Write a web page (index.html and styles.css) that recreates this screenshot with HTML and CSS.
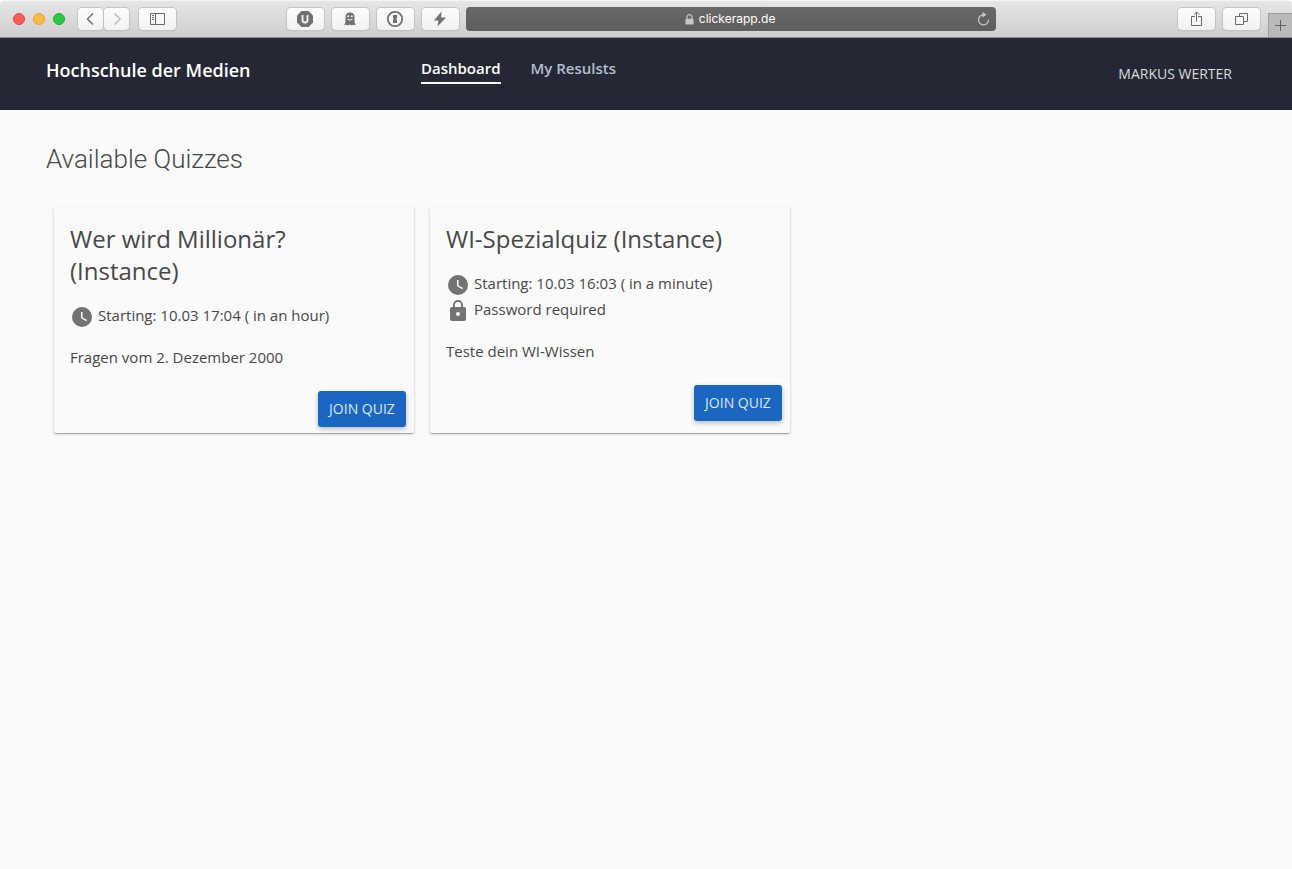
FILE: index.html
```html
<!DOCTYPE html>
<html lang="en">
<head>
<meta charset="utf-8">
<title>Available Quizzes</title>
<link rel="stylesheet" href="styles.css">
</head>
<body>
<div class="window">
  <div class="chrome">
    <div class="lights">
      <span class="light light-close"></span>
      <span class="light light-min"></span>
      <span class="light light-max"></span>
    </div>
    <div class="history">
      <button class="tool tool-small" type="button" aria-label="Back">
        <svg width="26" height="22" viewBox="0 0 26 22"><path d="M15 5.500L9.500 11l5.500 5.500" fill="none" stroke="#707070" stroke-width="1.500"/></svg>
      </button>
      <button class="tool tool-small" type="button" aria-label="Forward">
        <svg width="26" height="22" viewBox="0 0 26 22"><path d="M10.500 5.500L16 11l-5.500 5.500" fill="none" stroke="#bdbdbd" stroke-width="1.500"/></svg>
      </button>
    </div>
    <button class="tool" type="button" aria-label="Sidebar">
      <svg width="15" height="12" viewBox="0 0 15 12"><path d="M.5.5h14v11H.5zM5.500.5v11" fill="none" stroke="#6a6a6a"/><path d="M2 2.500h2M2 4.500h2M2 6.500h2" stroke="#6a6a6a"/></svg>
    </button>
    <span class="space-left"></span>
    <div class="tools">
      <button class="tool" type="button" aria-label="Content blocker">
        <svg width="18" height="18" viewBox="0 0 18 18"><path d="M5.500 1h7L17 5.500v7L12.500 17h-7L1 12.500v-7z" fill="#707070"/><path d="M6.500 5v5q0 2.500 2.500 2.500t2.500-2.500V5" fill="none" stroke="#f6f6f6" stroke-width="1.800"/></svg>
      </button>
      <button class="tool" type="button" aria-label="Tracker blocker">
        <svg width="14" height="16" viewBox="0 0 14 16"><path d="M2.500 6Q2.500 1.500 7 1.500T11.500 6v5l1.200 3.200-2.500-.4-1.200.7-2-1-2 1-1.200-.7-2.500.4L2.500 11z" fill="#707070"/><circle cx="5.200" cy="5.200" r="1" fill="#f6f6f6"/><circle cx="8.800" cy="5.200" r="1" fill="#f6f6f6"/><path d="M4.500 8q2.500 2.500 5 0" fill="none" stroke="#f6f6f6"/></svg>
      </button>
      <button class="tool" type="button" aria-label="Password manager">
        <svg width="18" height="18" viewBox="0 0 18 18"><circle cx="9" cy="9" r="7.200" fill="none" stroke="#707070" stroke-width="1.800"/><path d="M7 5h4v3l-.8 1 .8 1v3H7v-3l.8-1L7 8z" fill="#707070"/></svg>
      </button>
      <button class="tool" type="button" aria-label="Power saver">
        <svg width="14" height="16" viewBox="0 0 14 16"><path d="M8.500.5L1 9.500h4.500L4.500 15.500 13 6.500H8z" fill="#707070"/></svg>
      </button>
    </div>
    <div class="address">
      <span class="site">
        <svg width="9" height="11" viewBox="0 0 9 11"><path d="M2 5V3.200a2.500 2.500 0 0 1 5 0V5" fill="none" stroke="#c6c6c6" stroke-width="1.200"/><rect x="0.500" y="4.800" width="8" height="5.700" rx=".6" fill="#c6c6c6"/></svg>
        <span>clickerapp.de</span>
      </span>
      <button class="reload" type="button" aria-label="Reload">
        <svg width="13" height="14" viewBox="0 0 13 14"><path d="M6.500 2.800A5 5 0 1 0 11.500 7.800" fill="none" stroke="#c9c9c9" stroke-width="1.200"/><path d="M5.500 0l4 2.800-4 2.700z" fill="#c9c9c9"/></svg>
      </button>
    </div>
    <span class="space-right"></span>
    <div class="tools">
      <button class="tool" type="button" aria-label="Share">
        <svg width="11" height="16" viewBox="0 0 11 16"><path d="M4 5.500H.5v9h10v-9H7M5.500 10.500V1M2.800 3.700L5.500 1l2.700 2.700" fill="none" stroke="#6a6a6a"/></svg>
      </button>
      <button class="tool" type="button" aria-label="Show tabs">
        <svg width="13" height="12" viewBox="0 0 13 12"><path d="M.5 3.500h8v8h-8zM4.500 3V.5h8v8H9" fill="none" stroke="#6a6a6a"/></svg>
      </button>
    </div>
    <button class="new-tab" type="button" aria-label="New tab">
      <svg width="11" height="11" viewBox="0 0 11 11"><path d="M5.500 0v11M0 5.500h11" stroke="#606060"/></svg>
    </button>
  </div>

  <header class="header">
    <div class="brand">Hochschule der Medien</div>
    <nav class="nav">
      <a class="nav-link active" href="#dashboard">Dashboard</a>
      <a class="nav-link" href="#results">My Resulsts</a>
    </nav>
    <button class="user" type="button">Markus Werter</button>
  </header>

  <main class="main">
    <h1 class="title">Available Quizzes</h1>
    <div class="cards">
      <article class="card">
        <h2 class="card-title">Wer wird Millionär? (Instance)</h2>
        <ul class="facts">
          <li class="fact">
            <svg class="icon" width="24" height="24" viewBox="0 0 24 24"><path fill-rule="evenodd" d="M12 2a10 10 0 1 0 0 20 10 10 0 0 0 0-20zm4.200 14.200L11 13V7h1.500v5.200l4.500 2.700z" fill="#737373"/></svg>
            <span>Starting: 10.03 17:04 ( in an hour)</span>
          </li>
        </ul>
        <p class="description">Fragen vom 2. Dezember 2000</p>
        <div class="actions"><button class="join" type="button">Join Quiz</button></div>
      </article>
      <article class="card">
        <h2 class="card-title">WI-Spezialquiz (Instance)</h2>
        <ul class="facts">
          <li class="fact">
            <svg class="icon" width="24" height="24" viewBox="0 0 24 24"><path fill-rule="evenodd" d="M12 2a10 10 0 1 0 0 20 10 10 0 0 0 0-20zm4.200 14.200L11 13V7h1.500v5.200l4.500 2.700z" fill="#737373"/></svg>
            <span>Starting: 10.03 16:03 ( in a minute)</span>
          </li>
          <li class="fact">
            <svg class="icon" width="24" height="24" viewBox="0 0 24 24"><path d="M18 8h-1V6A5 5 0 0 0 7 6v2H6a2 2 0 0 0-2 2v10a2 2 0 0 0 2 2h12a2 2 0 0 0 2-2V10a2 2 0 0 0-2-2zm-6 9a2 2 0 1 1 0-4 2 2 0 0 1 0 4zm3.100-9H8.900V6a3.100 3.100 0 0 1 6.200 0z" fill="#737373"/></svg>
            <span>Password required</span>
          </li>
        </ul>
        <p class="description">Teste dein WI-Wissen</p>
        <div class="actions"><button class="join" type="button">Join Quiz</button></div>
      </article>
    </div>
  </main>
</div>
</body>
</html>
```
FILE: styles.css
```css
* {
  box-sizing: border-box;
}

body {
  margin: 0;
  background: #fff;
  color: #484848;
  font: 15px/24px "Open Sans", sans-serif;
}

button {
  margin: 0;
  padding: 0;
  border: 0;
  background: none;
  color: inherit;
  font: inherit;
}

svg {
  display: block;
  flex: none;
}

.window {
  min-height: 100vh;
  border-radius: 5px;
  overflow: hidden;
  background: #fafafa;
}

.chrome {
  display: flex;
  align-items: center;
  height: 38px;
  padding-left: 13px;
  border-top: 1px solid #f4f4f4;
  border-bottom: 1px solid #8f8f8f;
  background: linear-gradient(#e6e6e6, #cecece);
}

.lights {
  display: flex;
  gap: 8px;
  margin-right: 13px;
}

.light {
  width: 12px;
  height: 12px;
  border-radius: 50%;
  border: 1px solid #e0443e;
  background: #fc5b57;
}

.light-min {
  border-color: #dea034;
  background: #fdbc40;
}

.light-max {
  border-color: #20a935;
  background: #2ac940;
}

.history {
  display: flex;
  gap: 1px;
  margin-right: 10px;
}

.tool {
  display: flex;
  align-items: center;
  justify-content: center;
  width: 37px;
  height: 22px;
  border-radius: 4px;
  background: linear-gradient(#fdfdfd, #f2f2f2);
  box-shadow: 0 0 0 1px #c4c4c4, 0 1px 1px #a6a6a6;
}

.tool-small {
  width: 25px;
}

.space-left {
  flex: 111;
}

.space-right {
  flex: 182;
}

.tools {
  display: flex;
  gap: 8px;
}

.address {
  display: flex;
  align-items: center;
  width: 41.5%;
  height: 24px;
  margin-left: 7px;
  padding: 0 6px;
  border-radius: 4px;
  background: linear-gradient(#686868, #5e5e5e);
  color: #fff;
  font: 12px/24px Inter, sans-serif;
}

.site {
  display: flex;
  flex: 1;
  align-items: center;
  justify-content: center;
  gap: 5px;
  padding-left: 11px;
}

.new-tab {
  display: flex;
  align-items: center;
  justify-content: center;
  align-self: flex-end;
  width: 24px;
  height: 24px;
  margin-left: 8px;
  border: 1px solid #9c9c9c;
  border-width: 1px 0 0 1px;
  background: #bababa;
}

.header {
  display: grid;
  grid-template-columns: 375px 1fr auto;
  align-items: start;
  height: 72px;
  padding: 0 60px 0 46px;
  background: #252834;
  color: #fff;
}

.brand {
  padding-top: 20px;
  font-size: 18px;
  font-weight: 600;
}

.nav {
  display: flex;
  gap: 30px;
  padding-top: 20px;
}

.nav-link {
  padding-bottom: 3px;
  border-bottom: 2px solid transparent;
  color: #b3bfcb;
  font-weight: 600;
  line-height: 21px;
  text-decoration: none;
}

.active {
  border-color: #fff;
  color: #fff;
}

.user {
  padding-top: 18px;
  color: #dadbdd;
  font-size: 14px;
  line-height: 36px;
  text-transform: uppercase;
}

.main {
  padding: 33px 46px;
}

.title {
  margin: 0;
  font: 300 26px/32px Roboto, sans-serif;
}

.cards {
  display: grid;
  grid-template-columns: repeat(auto-fill, 360px);
  gap: 16px;
  padding: 32px 8px;
}

.card {
  min-height: 226px;
  padding: 16px 8px 6px 16px;
  border-radius: 2px;
  background: #fafafa;
  box-shadow: 0 1px 3px rgba(0, 0, 0, .2), 0 1px 1px rgba(0, 0, 0, .14), 0 2px 1px -1px rgba(0, 0, 0, .12);
}

.card-title {
  margin: 0 8px 16px 0;
  font-size: 24px;
  font-weight: 400;
  line-height: 32px;
}

.facts {
  margin: 0 0 16px;
  padding: 0;
  list-style: none;
}

.fact {
  display: flex;
  align-items: flex-start;
  gap: 4px;
  height: 26px;
}

.icon {
  align-self: flex-end;
}

.description {
  margin: 0 0 22px;
}

.actions {
  display: flex;
  justify-content: flex-end;
}

.join {
  width: 88px;
  border-radius: 3px;
  background: #1b66c0;
  box-shadow: 0 2px 5px rgba(0, 0, 0, .26);
  color: #dce8f5;
  font-size: 14px;
  line-height: 36px;
  text-transform: uppercase;
}
```
